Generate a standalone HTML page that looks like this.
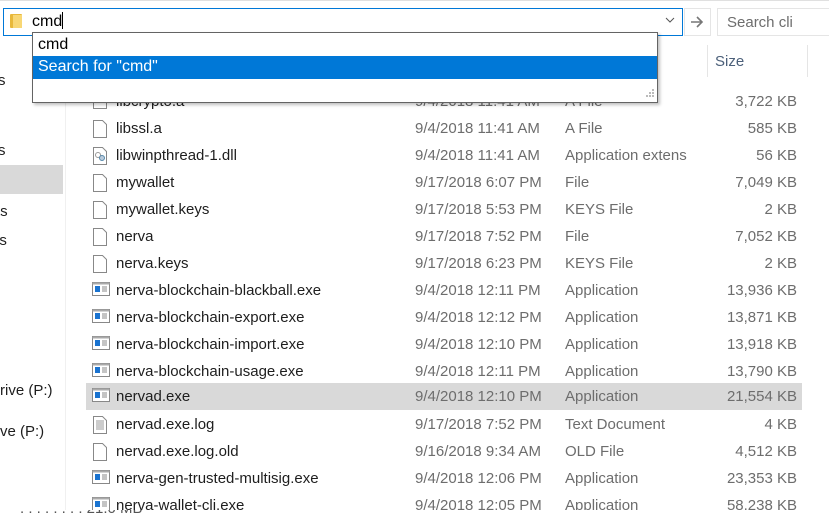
<!DOCTYPE html>
<html><head><style>
body{margin:0;width:829px;height:519px;overflow:hidden;background:#fff;font-family:"Liberation Sans",sans-serif;font-size:15px;color:#1e1e1e;position:relative}
.a{position:absolute;white-space:nowrap}
.row{position:absolute;left:86px;width:716px;height:27px}
.row span{position:absolute;top:5px}
.n{left:30px}.d{left:329px;color:#6d6d6d}.t{left:479px;color:#6d6d6d}.s{right:5px;color:#6d6d6d}
.ic{position:absolute;left:6px;top:4px}
</style></head><body>
<div class="a" style="left:0;top:0;width:829px;height:1px;background:#e0e0e0"></div>
<div class="a" style="left:65px;top:40px;width:1px;height:470px;background:#f0f0f0"></div>
<div class="a" style="left:0;top:165px;width:63px;height:29px;background:#d9d9d9"></div>
<div class="a" style="left:-2px;top:72px">s</div>
<div class="a" style="left:-2px;top:142px">s</div>
<div class="a" style="left:-4px;top:203px">ts</div>
<div class="a" style="left:-4px;top:232px">ls</div>
<div class="a" style="left:0;top:382px">rive (P:)</div>
<div class="a" style="left:0;top:423px">ve (P:)</div>
<div class="a" style="left:707px;top:45px;width:1px;height:32px;background:#e5e5e5"></div>
<div class="a" style="left:807px;top:45px;width:1px;height:32px;background:#e5e5e5"></div>
<div class="a" style="left:715px;top:53px;color:#4c607a">Size</div>
<div class="row" style="top:88px"><svg class="ic" width="16" height="18"><rect x="1.5" y="1.5" width="13" height="15" fill="#fff" stroke="#888"/></svg><span class="n">libcrypto.a</span><span class="d">9/4/2018 11:41 AM</span><span class="t">A File</span><span class="s">3,722 KB</span></div>
<div class="row" style="top:115px"><svg class="ic" width="16" height="20"><path d="M1.5 1.5h9l4 4v13h-13z" fill="#fff" stroke="#888"/></svg><span class="n">libssl.a</span><span class="d">9/4/2018 11:41 AM</span><span class="t">A File</span><span class="s">585 KB</span></div>
<div class="row" style="top:142px"><svg class="ic" width="16" height="20"><path d="M1.5 1.5h9l4 4v13h-13z" fill="#fff" stroke="#888"/><circle cx="6" cy="9" r="2.5" fill="none" stroke="#999"/><circle cx="10" cy="12" r="2.5" fill="#bcd" stroke="#58a"/></svg><span class="n">libwinpthread-1.dll</span><span class="d">9/4/2018 11:41 AM</span><span class="t">Application extens</span><span class="s">56 KB</span></div>
<div class="row" style="top:169px"><svg class="ic" width="16" height="20"><path d="M1.5 1.5h9l4 4v13h-13z" fill="#fff" stroke="#888"/></svg><span class="n">mywallet</span><span class="d">9/17/2018 6:07 PM</span><span class="t">File</span><span class="s">7,049 KB</span></div>
<div class="row" style="top:196px"><svg class="ic" width="16" height="20"><path d="M1.5 1.5h9l4 4v13h-13z" fill="#fff" stroke="#888"/></svg><span class="n">mywallet.keys</span><span class="d">9/17/2018 5:53 PM</span><span class="t">KEYS File</span><span class="s">2 KB</span></div>
<div class="row" style="top:223px"><svg class="ic" width="16" height="20"><path d="M1.5 1.5h9l4 4v13h-13z" fill="#fff" stroke="#888"/></svg><span class="n">nerva</span><span class="d">9/17/2018 7:52 PM</span><span class="t">File</span><span class="s">7,052 KB</span></div>
<div class="row" style="top:250px"><svg class="ic" width="16" height="20"><path d="M1.5 1.5h9l4 4v13h-13z" fill="#fff" stroke="#888"/></svg><span class="n">nerva.keys</span><span class="d">9/17/2018 6:23 PM</span><span class="t">KEYS File</span><span class="s">2 KB</span></div>
<div class="row" style="top:277px"><svg class="ic" width="18" height="16"><rect x="0.5" y="1.5" width="17" height="13" fill="#fff" stroke="#888"/><rect x="0.5" y="1.5" width="17" height="2" fill="#aaa"/><rect x="3" y="5" width="5" height="6" fill="#1a73d0"/><path d="M10 6h5M10 8h5M10 10h5" stroke="#888"/></svg><span class="n">nerva-blockchain-blackball.exe</span><span class="d">9/4/2018 12:11 PM</span><span class="t">Application</span><span class="s">13,936 KB</span></div>
<div class="row" style="top:304px"><svg class="ic" width="18" height="16"><rect x="0.5" y="1.5" width="17" height="13" fill="#fff" stroke="#888"/><rect x="0.5" y="1.5" width="17" height="2" fill="#aaa"/><rect x="3" y="5" width="5" height="6" fill="#1a73d0"/><path d="M10 6h5M10 8h5M10 10h5" stroke="#888"/></svg><span class="n">nerva-blockchain-export.exe</span><span class="d">9/4/2018 12:12 PM</span><span class="t">Application</span><span class="s">13,871 KB</span></div>
<div class="row" style="top:331px"><svg class="ic" width="18" height="16"><rect x="0.5" y="1.5" width="17" height="13" fill="#fff" stroke="#888"/><rect x="0.5" y="1.5" width="17" height="2" fill="#aaa"/><rect x="3" y="5" width="5" height="6" fill="#1a73d0"/><path d="M10 6h5M10 8h5M10 10h5" stroke="#888"/></svg><span class="n">nerva-blockchain-import.exe</span><span class="d">9/4/2018 12:10 PM</span><span class="t">Application</span><span class="s">13,918 KB</span></div>
<div class="row" style="top:358px"><svg class="ic" width="18" height="16"><rect x="0.5" y="1.5" width="17" height="13" fill="#fff" stroke="#888"/><rect x="0.5" y="1.5" width="17" height="2" fill="#aaa"/><rect x="3" y="5" width="5" height="6" fill="#1a73d0"/><path d="M10 6h5M10 8h5M10 10h5" stroke="#888"/></svg><span class="n">nerva-blockchain-usage.exe</span><span class="d">9/4/2018 12:11 PM</span><span class="t">Application</span><span class="s">13,790 KB</span></div>
<div class="row" style="top:383px;height:27px;background:#d9d9d9"><svg class="ic" width="18" height="16"><rect x="0.5" y="1.5" width="17" height="13" fill="#fff" stroke="#888"/><rect x="0.5" y="1.5" width="17" height="2" fill="#aaa"/><rect x="3" y="5" width="5" height="6" fill="#1a73d0"/><path d="M10 6h5M10 8h5M10 10h5" stroke="#888"/></svg><span class="n">nervad.exe</span><span class="d">9/4/2018 12:10 PM</span><span class="t">Application</span><span class="s">21,554 KB</span></div>
<div class="row" style="top:411px"><svg class="ic" width="16" height="20"><path d="M1.5 1.5h9l4 4v13h-13z" fill="#fff" stroke="#888"/><path d="M4 6h8M4 8h8M4 10h8M4 12h8M4 14h8" stroke="#999"/></svg><span class="n">nervad.exe.log</span><span class="d">9/17/2018 7:52 PM</span><span class="t">Text Document</span><span class="s">4 KB</span></div>
<div class="row" style="top:438px"><svg class="ic" width="16" height="20"><path d="M1.5 1.5h9l4 4v13h-13z" fill="#fff" stroke="#888"/></svg><span class="n">nervad.exe.log.old</span><span class="d">9/16/2018 9:34 AM</span><span class="t">OLD File</span><span class="s">4,512 KB</span></div>
<div class="row" style="top:465px"><svg class="ic" width="18" height="16"><rect x="0.5" y="1.5" width="17" height="13" fill="#fff" stroke="#888"/><rect x="0.5" y="1.5" width="17" height="2" fill="#aaa"/><rect x="3" y="5" width="5" height="6" fill="#1a73d0"/><path d="M10 6h5M10 8h5M10 10h5" stroke="#888"/></svg><span class="n">nerva-gen-trusted-multisig.exe</span><span class="d">9/4/2018 12:06 PM</span><span class="t">Application</span><span class="s">23,353 KB</span></div>
<div class="row" style="top:492px"><svg class="ic" width="18" height="16"><rect x="0.5" y="1.5" width="17" height="13" fill="#fff" stroke="#888"/><rect x="0.5" y="1.5" width="17" height="2" fill="#aaa"/><rect x="3" y="5" width="5" height="6" fill="#1a73d0"/><path d="M10 6h5M10 8h5M10 10h5" stroke="#888"/></svg><span class="n">nerva-wallet-cli.exe</span><span class="d">9/4/2018 12:05 PM</span><span class="t">Application</span><span class="s">58,238 KB</span></div>
<div class="a" style="left:0;top:510px;width:829px;height:9px;background:#fff;overflow:hidden"><span style="position:absolute;left:20px;top:-10px;color:#555">. . . . . . . . 21.0 MB</span></div>
<div class="a" style="left:3px;top:8px;width:678px;height:26px;border:1px solid #0078d7;background:#fff"></div>
<div class="a" style="left:10px;top:14px;width:12px;height:14px;background:#e8b83a;border-radius:1px"></div>
<div class="a" style="left:13px;top:15px;width:9px;height:13px;background:#f8d775"></div>
<div class="a" style="left:32px;top:12px;font-size:16px;color:#000">cmd<span style="display:inline-block;width:1px;height:17px;background:#000;vertical-align:-3px"></span></div>
<svg class="a" style="left:665px;top:17px" width="10" height="7"><path d="M1 1l4 4 4-4" fill="none" stroke="#555"/></svg>
<div class="a" style="left:684px;top:8px;width:25px;height:26px;border:1px solid #e5e5e5;background:#fff"></div>
<svg class="a" style="left:689px;top:14px" width="16" height="16"><path d="M2 8h11M8 3l5 5-5 5" fill="none" stroke="#777" stroke-width="1.6"/></svg>
<div class="a" style="left:717px;top:8px;width:120px;height:26px;border:1px solid #e5e5e5;background:#fff"></div>
<div class="a" style="left:727px;top:14px;color:#6d6d6d">Search cli</div>
<div class="a" style="left:32px;top:32px;width:624px;height:69px;border:1px solid #646464;background:#fff;box-shadow:2px 2px 3px rgba(0,0,0,.25)">
<div style="position:absolute;left:5px;top:3px;font-size:16px;color:#000">cmd</div>
<div style="position:absolute;left:0;top:23px;width:624px;height:23px;background:#0078d7;color:#fff;font-size:16px"><span style="position:absolute;left:5px;top:2px">Search for "cmd"</span></div>
<svg style="position:absolute;right:2px;bottom:2px" width="11" height="11"><g fill="#bbb"><rect x="8" y="0" width="2" height="2"/><rect x="5" y="3" width="2" height="2"/><rect x="8" y="3" width="2" height="2"/><rect x="2" y="6" width="2" height="2"/><rect x="5" y="6" width="2" height="2"/><rect x="8" y="6" width="2" height="2"/></g></svg>
</div>
</body></html>
